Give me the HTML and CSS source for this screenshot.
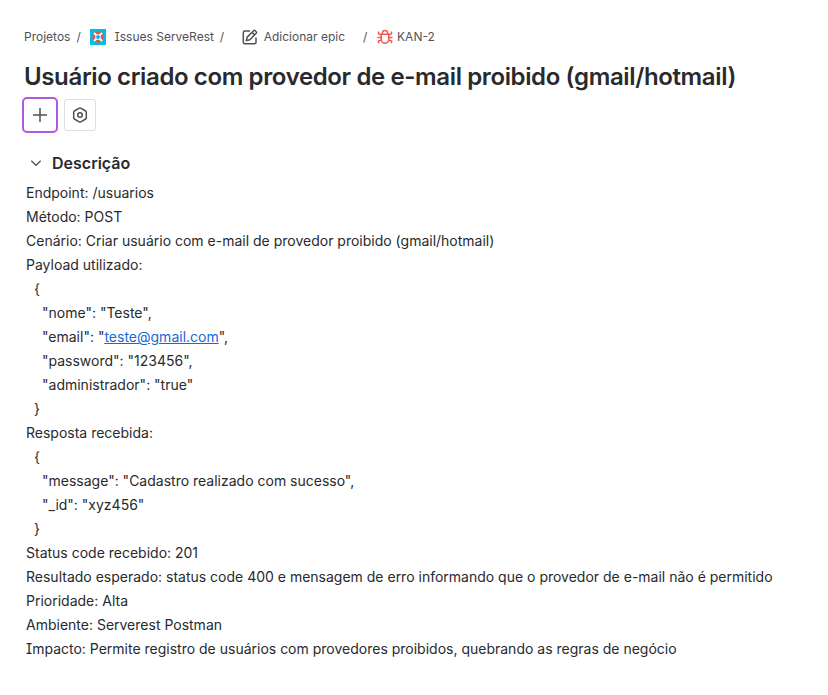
FILE: index.html
```html
<!DOCTYPE html>
<html lang="pt-BR">
<head>
<meta charset="utf-8">
<title>KAN-2</title>
<link rel="stylesheet" href="styles.css">
</head>
<body>
<main class="issue">
  <nav class="crumbs">
    <span>Projetos</span><span class="sep first">/</span>
    <svg class="project" viewBox="0 0 16 16"><path fill="#00bfe6" d="M0 0h16v16H0z"/><circle cx="8" cy="8" r="4.300" fill="none" stroke="#f0504a" stroke-width="3"/><path stroke="#fff" stroke-width="2" d="M4 4l2.300 2.300M12 4L9.700 6.300M4 12l2.300-2.300M12 12L9.700 9.700"/><circle cx="8" cy="8" r="2.700" fill="#fff"/><circle cx="8" cy="8" r="2" fill="#00bfe6"/></svg>
    <span class="project-name">Issues ServeRest</span><span class="sep second">/</span>
    <svg class="edit" viewBox="0 0 16 16" fill="none" stroke="#505258" stroke-width="1.5"><path d="M8 2H2.800Q1.300 2 1.300 3.500v9.700q0 1.500 1.500 1.500h9.700q1.500 0 1.500-1.500V8.500M5.200 8.100l6.400-6.400q.8-.8 1.600 0l1 1q.8.8 0 1.600l-6.400 6.400-3.400.8zM10 3.300l2.600 2.600"/></svg>
    <span class="epic">Adicionar epic</span><span class="sep third">/</span>
    <svg class="bug" viewBox="0 0 16 16" fill="none" stroke="#f15b50" stroke-width="1.5"><path d="M4.300 5.300h7.400v5.200a3.700 3.700 0 0 1-7.400 0zM5.300 5V4.200a2.700 2.700 0 0 1 5.400 0V5M4.300 8.500H.5M11.700 8.500h3.800M4.300 6L1.500 4.800V2.500M11.700 6l2.800-1.200V2.500M4.400 11l-2.900 1v2.300M11.600 11l2.900 1v2.300"/></svg>
    <span class="key">KAN-2</span>
  </nav>
  <h1>Usuário criado com provedor de e-mail proibido (gmail/hotmail)</h1>
  <div class="actions">
    <button class="focused" aria-label="Adicionar"><svg viewBox="0 0 16 16" fill="none" stroke="#505258" stroke-width="1.5"><path d="M8 1v14M1 8h14"/></svg></button>
    <button aria-label="Aplicativos"><svg viewBox="0 0 16 16" fill="none" stroke="#505258" stroke-width="1.5"><path stroke-linejoin="round" d="M7.300 1.200q.7-.4 1.400 0l5 2.800q.6.4.6 1.100v5.800q0 .7-.6 1.100l-5 2.800q-.7.4-1.400 0l-5-2.800q-.6-.4-.6-1.100V5.100q0-.7.6-1.100z"/><circle cx="8" cy="8" r="2.300"/></svg></button>
  </div>
  <h2><svg viewBox="0 0 12 12" fill="none" stroke="#505258" stroke-width="1.2"><path d="M1.300 3.700L6 8.300l4.700-4.600"/></svg>Descrição</h2>
  <section class="description">
    <p>Endpoint: /usuarios</p>
    <p>Método: POST</p>
    <p>Cenário: Criar usuário com e-mail de provedor proibido (gmail/hotmail)</p>
    <p>Payload utilizado:</p>
    <p class="brace">{</p>
    <p class="field">"nome": "Teste",</p>
    <p class="field">"email": "<a>teste@gmail.com</a>",</p>
    <p class="field">"password": "123456",</p>
    <p class="field">"administrador": "true"</p>
    <p class="brace">}</p>
    <p>Resposta recebida:</p>
    <p class="brace">{</p>
    <p class="field">"message": "Cadastro realizado com sucesso",</p>
    <p class="field">"_id": "xyz456"</p>
    <p class="brace">}</p>
    <p>Status code recebido: 201</p>
    <p>Resultado esperado: status code 400 e mensagem de erro informando que o provedor de e-mail não é permitido</p>
    <p>Prioridade: Alta</p>
    <p>Ambiente: Serverest Postman</p>
    <p>Impacto: Permite registro de usuários com provedores proibidos, quebrando as regras de negócio</p>
  </section>
</main>
</body>
</html>
```
FILE: styles.css
```css
* { box-sizing: border-box; }
body { margin: 0; background: #fff; color: #292a2e; font-family: Inter, "Liberation Sans", sans-serif; font-feature-settings: "cv08"; }
.issue { padding: 27px 20px 0 24px; }
.crumbs { display: flex; align-items: center; height: 20px; color: #505258; font-size: 12px; line-height: 20px; white-space: nowrap; }
.crumbs svg { width: 16px; height: 16px; flex: none; }
.sep { width: 5px; }
.first { margin: 0 9px 0 6px; }
.project-name { width: 99.3px; margin-left: 8px; }
.second { margin: 0 17px 0 6px; }
.epic { margin-left: 6px; }
.third { margin: 0 9px 0 18px; }
.key { margin-left: 4px; }
h1 { margin: 16px 0 0; font-size: 24px; line-height: 28px; font-weight: 600; font-optical-sizing: none; font-variation-settings: "opsz" 14; letter-spacing: -0.36px; word-spacing: -0.1px; white-space: nowrap; }
.actions { display: flex; gap: 8px; margin-top: 8px; }
button { display: flex; align-items: center; justify-content: center; width: 32px; height: 32px; padding: 0; border: 1px solid #dddee1; border-radius: 3px; background: #fff; }
button svg { width: 16px; height: 16px; }
.focused { border-color: #fff; outline: 2px solid #af59e1; }
h2 { display: flex; align-items: center; gap: 10px; height: 24px; margin: 20px 0 6px 6px; font-size: 16px; line-height: 24px; font-weight: 600; }
h2 svg { width: 12px; height: 12px; }
.description { padding-left: 2px; font-size: 14px; line-height: 24px; white-space: nowrap; }
p { margin: 0; }
.brace { padding-left: 8px; }
.field { padding-left: 16px; }
a { color: #1868db; text-decoration: underline; }
```
